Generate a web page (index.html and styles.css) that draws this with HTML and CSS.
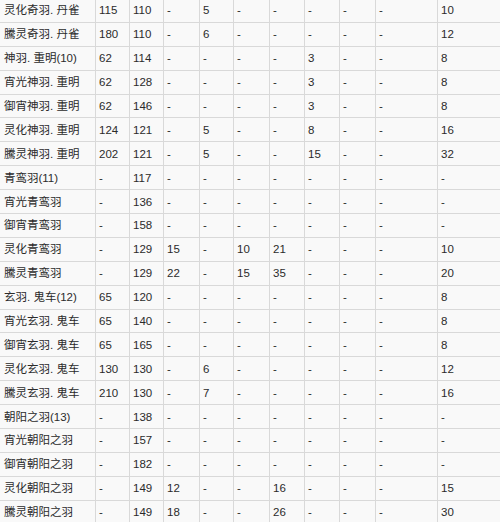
FILE: index.html
```html
<!DOCTYPE html>
<html lang="zh">
<head>
<meta charset="utf-8">
<title>羽毛属性表</title>
<link rel="stylesheet" href="styles.css">
</head>
<body>
<table class="data">
<colgroup>
<col class="c-name"><col class="c-a"><col class="c-a"><col class="c-b"><col class="c-a"><col class="c-b"><col class="c-c"><col class="c-c"><col class="c-b"><col class="c-w"><col class="c-last">
</colgroup>
<tbody>
<tr><td>灵化奇羽. 丹雀</td><td>115</td><td>110</td><td>-</td><td>5</td><td>-</td><td>-</td><td>-</td><td>-</td><td>-</td><td>10</td></tr>
<tr><td>騰灵奇羽. 丹雀</td><td>180</td><td>110</td><td>-</td><td>6</td><td>-</td><td>-</td><td>-</td><td>-</td><td>-</td><td>12</td></tr>
<tr><td>神羽. 重明(10)</td><td>62</td><td>114</td><td>-</td><td>-</td><td>-</td><td>-</td><td>3</td><td>-</td><td>-</td><td>8</td></tr>
<tr><td>宵光神羽. 重明</td><td>62</td><td>128</td><td>-</td><td>-</td><td>-</td><td>-</td><td>3</td><td>-</td><td>-</td><td>8</td></tr>
<tr><td>御宵神羽. 重明</td><td>62</td><td>146</td><td>-</td><td>-</td><td>-</td><td>-</td><td>3</td><td>-</td><td>-</td><td>8</td></tr>
<tr><td>灵化神羽. 重明</td><td>124</td><td>121</td><td>-</td><td>5</td><td>-</td><td>-</td><td>8</td><td>-</td><td>-</td><td>16</td></tr>
<tr><td>騰灵神羽. 重明</td><td>202</td><td>121</td><td>-</td><td>5</td><td>-</td><td>-</td><td>15</td><td>-</td><td>-</td><td>32</td></tr>
<tr><td>青鸾羽(11)</td><td>-</td><td>117</td><td>-</td><td>-</td><td>-</td><td>-</td><td>-</td><td>-</td><td>-</td><td>-</td></tr>
<tr><td>宵光青鸾羽</td><td>-</td><td>136</td><td>-</td><td>-</td><td>-</td><td>-</td><td>-</td><td>-</td><td>-</td><td>-</td></tr>
<tr><td>御宵青鸾羽</td><td>-</td><td>158</td><td>-</td><td>-</td><td>-</td><td>-</td><td>-</td><td>-</td><td>-</td><td>-</td></tr>
<tr><td>灵化青鸾羽</td><td>-</td><td>129</td><td>15</td><td>-</td><td>10</td><td>21</td><td>-</td><td>-</td><td>-</td><td>10</td></tr>
<tr><td>騰灵青鸾羽</td><td>-</td><td>129</td><td>22</td><td>-</td><td>15</td><td>35</td><td>-</td><td>-</td><td>-</td><td>20</td></tr>
<tr><td>玄羽. 鬼车(12)</td><td>65</td><td>120</td><td>-</td><td>-</td><td>-</td><td>-</td><td>-</td><td>-</td><td>-</td><td>8</td></tr>
<tr><td>宵光玄羽. 鬼车</td><td>65</td><td>140</td><td>-</td><td>-</td><td>-</td><td>-</td><td>-</td><td>-</td><td>-</td><td>8</td></tr>
<tr><td>御宵玄羽. 鬼车</td><td>65</td><td>165</td><td>-</td><td>-</td><td>-</td><td>-</td><td>-</td><td>-</td><td>-</td><td>8</td></tr>
<tr><td>灵化玄羽. 鬼车</td><td>130</td><td>130</td><td>-</td><td>6</td><td>-</td><td>-</td><td>-</td><td>-</td><td>-</td><td>12</td></tr>
<tr><td>騰灵玄羽. 鬼车</td><td>210</td><td>130</td><td>-</td><td>7</td><td>-</td><td>-</td><td>-</td><td>-</td><td>-</td><td>16</td></tr>
<tr><td>朝阳之羽(13)</td><td>-</td><td>138</td><td>-</td><td>-</td><td>-</td><td>-</td><td>-</td><td>-</td><td>-</td><td>-</td></tr>
<tr><td>宵光朝阳之羽</td><td>-</td><td>157</td><td>-</td><td>-</td><td>-</td><td>-</td><td>-</td><td>-</td><td>-</td><td>-</td></tr>
<tr><td>御宵朝阳之羽</td><td>-</td><td>182</td><td>-</td><td>-</td><td>-</td><td>-</td><td>-</td><td>-</td><td>-</td><td>-</td></tr>
<tr><td>灵化朝阳之羽</td><td>-</td><td>149</td><td>12</td><td>-</td><td>-</td><td>16</td><td>-</td><td>-</td><td>-</td><td>15</td></tr>
<tr><td>騰灵朝阳之羽</td><td>-</td><td>149</td><td>18</td><td>-</td><td>-</td><td>26</td><td>-</td><td>-</td><td>-</td><td>30</td></tr>
</tbody>
</table>
</body>
</html>
```
FILE: styles.css
```css
html, body {
  margin: 0;
  padding: 0;
  background: #f9f9f9;
  overflow: hidden;
}

.data {
  border-collapse: collapse;
  table-layout: fixed;
  width: 502px;
  margin: -2px 0 0 -1px;
  font-family: "Liberation Sans Narrow", "Liberation Sans", "Noto Sans CJK SC", sans-serif;
  font-size: 11.5px;
  color: #2b2b2b;
  background: #f9f9f9;
}

.c-name { width: 96px; }
.c-a { width: 34px; }
.c-b { width: 36px; }
.c-c { width: 35px; }
.c-w { width: 62px; }
.c-last { width: 64px; }

.data td {
  border: 1px solid #d9d9d9;
  height: 22.9px;
  padding: 0 0 0 3px;
  vertical-align: middle;
  white-space: nowrap;
  overflow: hidden;
  line-height: 14px;
}

.data td:first-child {
  padding-left: 4px;
}
```
